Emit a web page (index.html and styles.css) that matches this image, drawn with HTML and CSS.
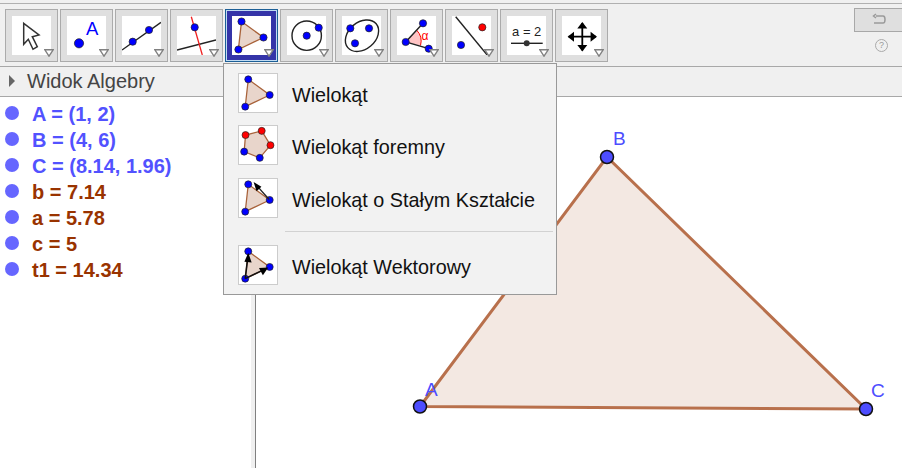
FILE: index.html
```html
<!DOCTYPE html>
<html lang="pl">
<head>
<meta charset="UTF-8">
<meta name="viewport" content="width=device-width, initial-scale=1.0">
<title>Widok Algebry</title>
<link rel="stylesheet" href="styles.css">
</head>
<body>
<svg class="defs" width="0" height="0">
  <symbol id="triangle" viewBox="0 0 39 39">
    <polygon class="shape" points="9.5,5.5 31.5,21.5 6.4,33.5"/>
    <circle class="pt" cx="9.5" cy="5.5" r="3.6"/>
    <circle class="pt" cx="31.5" cy="21.5" r="3.6"/>
    <circle class="pt" cx="6.4" cy="33.5" r="3.6"/>
  </symbol>
  <symbol id="corner" viewBox="0 0 10 8">
    <polygon points="0.8,0.8 9.2,0.8 5,7.2" fill="#fff" stroke="#808080" stroke-width="1.4"/>
  </symbol>
</svg>

<div class="toolbar">
  <div class="tool">
    <svg class="icon" viewBox="0 0 39 39"><polygon points="11.7,7.3 27,19 20.3,20.7 25.3,30.7 21,33.3 16.3,23.3 11.7,28.3" fill="#fff" stroke="#333" stroke-width="1.5"/></svg>
    <svg class="corner"><use href="#corner"/></svg>
  </div>
  <div class="tool">
    <svg class="icon" viewBox="0 0 39 39"><circle class="pt" cx="12" cy="27.3" r="4.6"/><text class="icon-letter" x="19" y="19">A</text></svg>
    <svg class="corner"><use href="#corner"/></svg>
  </div>
  <div class="tool">
    <svg class="icon" viewBox="0 0 39 39"><line class="ln" x1="0" y1="34" x2="39" y2="6.3"/><circle class="pt" cx="10.7" cy="25.7" r="3.6"/><circle class="pt" cx="27" cy="14" r="3.6"/></svg>
    <svg class="corner"><use href="#corner"/></svg>
  </div>
  <div class="tool">
    <svg class="icon" viewBox="0 0 39 39"><line class="ln" x1="0" y1="34" x2="39" y2="24"/><line class="ln-red" x1="14.3" y1="0.7" x2="25.3" y2="39"/><circle class="pt" cx="17.7" cy="11.3" r="3.6"/></svg>
    <svg class="corner"><use href="#corner"/></svg>
  </div>
  <div class="tool active">
    <svg class="icon"><use href="#triangle"/></svg>
    <svg class="corner"><use href="#corner"/></svg>
  </div>
  <div class="tool">
    <svg class="icon" viewBox="0 0 39 39"><circle class="ln" cx="19.7" cy="19.7" r="14.7"/><circle class="pt" cx="19.7" cy="19.7" r="3.6"/><circle class="pt" cx="31.7" cy="11.7" r="3.6"/></svg>
    <svg class="corner"><use href="#corner"/></svg>
  </div>
  <div class="tool">
    <svg class="icon" viewBox="0 0 39 39"><ellipse class="ln" cx="20" cy="19.7" rx="18.5" ry="13.5" transform="rotate(-40 20 19.7)"/><circle class="pt" cx="8.3" cy="12.3" r="3.6"/><circle class="pt" cx="27" cy="12.3" r="3.6"/><circle class="pt" cx="13" cy="27.3" r="3.6"/></svg>
    <svg class="corner"><use href="#corner"/></svg>
  </div>
  <div class="tool">
    <svg class="icon" viewBox="0 0 39 39"><path d="M8.7 26 L19.5 14 A16 16 0 0 1 23.5 29.5 Z" fill="#ffc4c4"/><path d="M19.5 14 A16 16 0 0 1 23.5 29.5" fill="none" stroke="#f00"/><polyline class="ln" points="26,7.3 8.7,26 31.7,32.7"/><circle class="pt" cx="8.7" cy="26" r="3.6"/><circle class="pt" cx="26" cy="7.3" r="3.6"/><circle class="pt" cx="31.7" cy="32.7" r="3.6"/><text class="icon-alpha" x="24.5" y="24">α</text></svg>
    <svg class="corner"><use href="#corner"/></svg>
  </div>
  <div class="tool">
    <svg class="icon" viewBox="0 0 39 39"><line class="ln" x1="3.7" y1="0.7" x2="36" y2="40"/><circle class="pt-red" cx="30.3" cy="11.3" r="3.6"/><circle class="pt" cx="9" cy="29" r="3.6"/></svg>
    <svg class="corner"><use href="#corner"/></svg>
  </div>
  <div class="tool">
    <svg class="icon" viewBox="0 0 39 39"><text class="icon-slider" x="19.7" y="19.5">a = 2</text><line class="ln" x1="4" y1="27.3" x2="35.7" y2="27.3"/><circle cx="19.7" cy="27.3" r="3" fill="#333"/></svg>
    <svg class="corner"><use href="#corner"/></svg>
  </div>
  <div class="tool">
    <svg class="icon" viewBox="0 0 39 39"><path d="M20.3 7 V34.4 M6.6 20.7 H34" stroke="#000" stroke-width="1.8"/><path d="M20.3 6 l-5 6.4 h10 Z M20.3 35.4 l-5 -6.4 h10 Z M5.6 20.7 l6.4 -5 v10 Z M35 20.7 l-6.4 -5 v10 Z" fill="#000"/></svg>
    <svg class="corner"><use href="#corner"/></svg>
  </div>

  <div class="side-actions">
    <div class="undo">
      <svg width="16" height="14" viewBox="0 0 16 14"><path d="M5 3 H12 Q14 3 14 6.5 Q14 10 12 10 H3 M5 1 L2.5 3 L5 5" fill="none" stroke="#9a9a9a" stroke-width="1.5"/></svg>
    </div>
    <div class="help">?</div>
  </div>
</div>

<div class="panels">
  <div class="algebra">
    <div class="panel-header">
      <span class="caret"></span>
      <span class="panel-title">Widok Algebry</span>
    </div>
    <ul class="objects">
      <li class="point"><span class="bullet"></span><span>A = (1, 2)</span></li>
      <li class="point"><span class="bullet"></span><span>B = (4, 6)</span></li>
      <li class="point"><span class="bullet"></span><span>C = (8.14, 1.96)</span></li>
      <li class="value"><span class="bullet"></span><span>b = 7.14</span></li>
      <li class="value"><span class="bullet"></span><span>a = 5.78</span></li>
      <li class="value"><span class="bullet"></span><span>c = 5</span></li>
      <li class="value"><span class="bullet"></span><span>t1 = 14.34</span></li>
    </ul>
  </div>
  <div class="graphics">
    <div class="panel-header"></div>
    <svg class="canvas" viewBox="256 97 646 371">
      <polygon class="tri" points="420,406.5 607,157 866,409"/>
      <circle class="vertex" cx="420" cy="406.5" r="6.5"/>
      <circle class="vertex" cx="607" cy="157" r="6.5"/>
      <circle class="vertex" cx="866" cy="409" r="6.5"/>
      <text class="vertex-label" x="425" y="396">A</text>
      <text class="vertex-label" x="613" y="145">B</text>
      <text class="vertex-label" x="871" y="397">C</text>
    </svg>
  </div>
</div>

<div class="menu">
  <div class="menu-item">
    <svg class="menu-icon"><use href="#triangle"/></svg>
    <span>Wielokąt</span>
  </div>
  <div class="menu-item">
    <svg class="menu-icon" viewBox="0 0 39 39">
      <polygon class="shape" points="23.3,5 32.3,19.7 21.3,32.7 5.3,26.3 6.7,9.3"/>
      <circle class="pt-red" cx="23.3" cy="5" r="3.6"/>
      <circle class="pt-red" cx="32.3" cy="19.7" r="3.6"/>
      <circle class="pt" cx="21.3" cy="32.7" r="3.6"/>
      <circle class="pt" cx="5.3" cy="26.3" r="3.6"/>
      <circle class="pt-red" cx="6.7" cy="9.3" r="3.6"/>
    </svg>
    <span>Wielokąt foremny</span>
  </div>
  <div class="menu-item third">
    <svg class="menu-icon" viewBox="0 0 39 39">
      <use href="#triangle" width="39" height="39"/>
      <line class="ln" x1="31" y1="21" x2="18" y2="6.5"/>
      <polygon points="15,3 23,8 18,12.5"/>
    </svg>
    <span>Wielokąt o Stałym Kształcie</span>
  </div>
  <div class="menu-sep"></div>
  <div class="menu-item">
    <svg class="menu-icon" viewBox="0 0 39 39">
      <use href="#triangle" width="39" height="39"/>
      <line class="ln-thick" x1="6.4" y1="33.5" x2="9" y2="12"/>
      <polygon points="9.5,7 13,17 5.5,16.2"/>
      <line class="ln-thick" x1="6.4" y1="33.5" x2="24" y2="25"/>
      <polygon points="30,22 24.5,30 20.5,22.5"/>
    </svg>
    <span>Wielokąt Wektorowy</span>
  </div>
</div>
</body>
</html>
```

FILE: styles.css
```css
body {
  margin: 0;
  width: 902px;
  height: 468px;
  overflow: hidden;
  position: relative;
  background-color: #f0f0f0;
  font-family: "Liberation Sans", Arial, sans-serif;
}
.defs {
  position: absolute;
}

/* toolbar */
.toolbar {
  display: flex;
  gap: 2px;
  box-sizing: border-box;
  height: 64px;
  margin-top: 3px;
  padding: 5px 0 0 5px;
  border-top: 1px solid #b0b0b0;
  border-bottom: 1px solid #a8a8a8;
}
.tool {
  position: relative;
  box-sizing: border-box;
  width: 53px;
  height: 53px;
  padding: 6px;
  border: 1px solid #ababab;
  background-color: #dfdfdf;
}
.icon {
  display: block;
  width: 39px;
  height: 39px;
  background-color: #fff;
}
.corner {
  position: absolute;
  right: 3px;
  bottom: 4px;
  width: 10px;
  height: 8px;
}
.tool.active {
  border-color: #1d5f96;
  background-color: #c0dcf2;
}
.tool.active .icon {
  outline: 5px solid #3434a8;
}
.side-actions {
  margin-left: auto;
  margin-top: -1px;
  width: 48px;
}
.undo {
  display: flex;
  align-items: center;
  justify-content: center;
  box-sizing: border-box;
  height: 24px;
  border: 1px solid #a8a8a8;
  border-right: none;
  background-color: #dfdfdf;
}
.help {
  box-sizing: border-box;
  width: 13px;
  height: 13px;
  margin: 7px 0 0 21px;
  border: 1px solid #aaa;
  border-radius: 50%;
  color: #999;
  font-size: 9px;
  line-height: 11px;
  text-align: center;
}

/* svg parts */
.pt {
  fill: #0000ff;
  stroke: #222;
  stroke-width: 0.7;
}
.pt-red {
  fill: #ff0000;
  stroke: #222;
  stroke-width: 0.7;
}
.ln {
  fill: none;
  stroke: #222;
  stroke-width: 1.4;
}
.ln-thick {
  stroke: #111;
  stroke-width: 1.6;
}
.ln-red {
  stroke: #f02020;
  stroke-width: 1.3;
}
.shape {
  fill: #e8d5cb;
  stroke: #a8623a;
  stroke-width: 1.3;
}
.icon-letter {
  fill: #0000ff;
  font-size: 18.5px;
}
.icon-alpha {
  fill: #f00;
  font-size: 12px;
}
.icon-slider {
  fill: #222;
  font-size: 13px;
  text-anchor: middle;
}

/* panels */
.panels {
  display: flex;
  height: 401px;
}
.panel-header {
  display: flex;
  align-items: center;
  box-sizing: border-box;
  height: 30px;
  border-bottom: 1px solid #a8a8a8;
  background-color: #f0f0f0;
}
.caret {
  width: 0;
  height: 0;
  margin-left: 9px;
  margin-bottom: 1px;
  border-left: 6px solid #666;
  border-top: 6px solid transparent;
  border-bottom: 6px solid transparent;
}
.panel-title {
  margin-left: 12px;
  color: #444;
  font-size: 20px;
}
.algebra {
  width: 255px;
}
.objects {
  box-sizing: border-box;
  height: 371px;
  margin: 0;
  padding: 3px 0 0 5px;
  list-style: none;
  border-right: 4px solid #f0f0f0;
  background-color: #fff;
  font-size: 20px;
  font-weight: bold;
}
.objects li {
  display: flex;
  align-items: center;
  gap: 13px;
  height: 26px;
}
.objects li span:last-child {
  padding-top: 2px;
}
.bullet {
  width: 14px;
  height: 14px;
  border-radius: 50%;
  background-color: #6666ff;
}
.point {
  color: #5252ff;
}
.value {
  color: #993300;
}
.graphics {
  flex: 1;
  border-left: 1px solid #808080;
}
.canvas {
  display: block;
  width: 646px;
  height: 371px;
  background-color: #fff;
}
.tri {
  fill: #f3e8e2;
  stroke: #b8704c;
  stroke-width: 3;
}
.vertex {
  fill: #4d4dff;
  stroke: #111;
  stroke-width: 1.5;
}
.vertex-label {
  fill: #4d4dff;
  font-size: 19px;
}

/* dropdown */
.menu {
  position: absolute;
  left: 223px;
  top: 63px;
  box-sizing: border-box;
  width: 334px;
  height: 232px;
  padding-top: 9px;
  border: 1px solid #999;
  background-color: #f2f2f2;
}
.menu-item {
  display: flex;
  align-items: center;
  gap: 14px;
  height: 40px;
  margin: 0 0 12px 14px;
  font-size: 19.8px;
  color: #111;
}
.menu-item span {
  padding-top: 5px;
}
.menu-item.third {
  margin-top: 13px;
  margin-bottom: 13px;
}
.menu-icon {
  box-sizing: border-box;
  width: 40px;
  height: 40px;
  border: 1px solid #ccc;
  background-color: #fff;
}
.menu-sep {
  height: 1px;
  margin: 0 3px 13px 61px;
  background-color: #d2d2d2;
}
```
